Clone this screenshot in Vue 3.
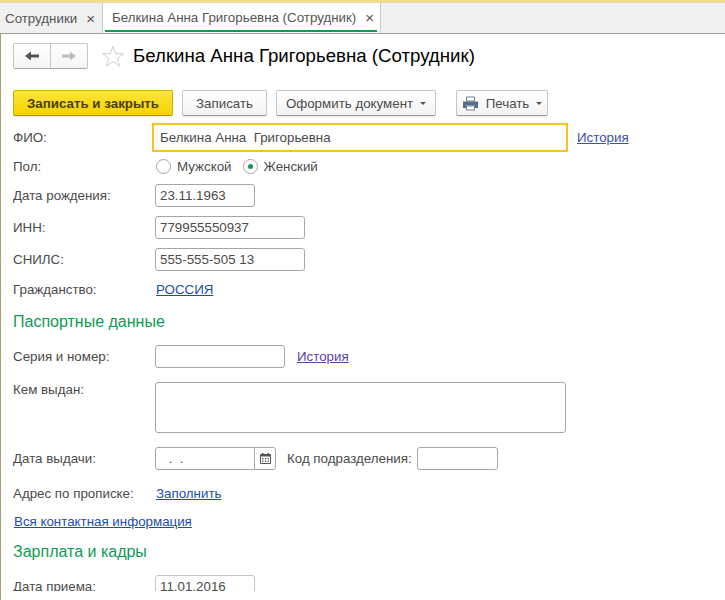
<script setup>
const dropdowns = ['Оформить документ'];
</script>

<template>
  <div class="page">
    <div class="topline"></div>
    <div class="tabs">
      <div class="tab">
        <span>Сотрудники</span>
        <span class="tab-x">×</span>
      </div>
      <div class="tab active">
        <span>Белкина Анна Григорьевна (Сотрудник)</span>
        <span class="tab-x">×</span>
      </div>
    </div>
    <div class="body">
      <div class="form">
        <div class="head">
          <div class="nav">
            <button class="nav-btn">
              <svg width="16" height="12" viewBox="0 0 16 12"><path d="M1 6 7 1.5V4.5H15V7.5H7V10.5Z" fill="#555" /></svg>
            </button>
            <button class="nav-btn">
              <svg width="16" height="12" viewBox="0 0 16 12"><path d="M15 6 9 1.5V4.5H1V7.5H9V10.5Z" fill="#bbb" /></svg>
            </button>
          </div>
          <svg class="star" width="24" height="23" viewBox="0 0 26 25">
            <path d="M13 1.5 16 9.5H24.5L17.7 14.6 20.2 23 13 18 5.8 23 8.3 14.6 1.5 9.5H10Z" fill="#fff" stroke="#c9c9c9" />
          </svg>
          <h1 class="title">Белкина Анна Григорьевна (Сотрудник)</h1>
        </div>

        <div class="toolbar">
          <button class="btn primary">Записать и закрыть</button>
          <button class="btn save">Записать</button>
          <button v-for="d in dropdowns" :key="d" class="btn doc">{{ d }}<i class="caret"></i></button>
          <button class="btn print">
            <svg width="17" height="15" viewBox="0 0 17 15">
              <path d="M4.5 1h8v4h-8z" fill="#fff" stroke="#6b7f91" />
              <path d="M1 5.5h15v6.5h-3v-2.5h-9v2.5h-3z" fill="#4f6f8c" />
              <path d="M4.5 10h8v4h-8z" fill="#fff" stroke="#6b7f91" />
            </svg>
            <span>Печать</span><i class="caret"></i>
          </button>
        </div>

        <div class="row fio">
          <label>ФИО:</label>
          <div class="input focused">Белкина Анна&nbsp; Григорьевна</div>
          <a class="link history">История</a>
        </div>

        <div class="row sex">
          <label>Пол:</label>
          <span class="radio first"></span><span class="radio-text">Мужской</span>
          <span class="radio on"></span><span class="radio-text">Женский</span>
        </div>

        <div class="row birth">
          <label>Дата рождения:</label>
          <div class="input w100">23.11.1963</div>
        </div>
        <div class="row inn">
          <label>ИНН:</label>
          <div class="input w150">779955550937</div>
        </div>
        <div class="row snils">
          <label>СНИЛС:</label>
          <div class="input w150">555-555-505 13</div>
        </div>
        <div class="row citizen">
          <label>Гражданство:</label>
          <a class="link">РОССИЯ</a>
        </div>

        <h2 class="section passport">Паспортные данные</h2>

        <div class="row number">
          <label>Серия и номер:</label>
          <div class="input w130"></div>
          <a class="link visited">История</a>
        </div>
        <div class="row issued">
          <label>Кем выдан:</label>
          <div class="input area"></div>
        </div>
        <div class="row issue-date">
          <label>Дата выдачи:</label>
          <div class="input date">
            <span class="date-value">&nbsp;.&nbsp;&nbsp;.</span>
            <span class="date-btn">
              <svg width="11" height="11" viewBox="0 0 11 11">
                <path d="M0.5 1.5h10v9h-10z" fill="#fff" stroke="#555" />
                <path d="M0.5 1h10v2.5h-10zM2 0h1.5v2H2zM7.5 0H9v2H7.5z" fill="#555" />
                <path d="M2 5h1.5v1.2H2zM4.8 5h1.5v1.2H4.8zM7.5 5H9v1.2H7.5zM2 7.6h1.5v1.2H2zM4.8 7.6h1.5v1.2H4.8zM7.5 7.6H9v1.2H7.5z" fill="#555" />
              </svg>
            </span>
          </div>
          <span class="code-label">Код подразделения:</span>
          <div class="input code"></div>
        </div>
        <div class="row address">
          <label>Адрес по прописке:</label>
          <a class="link">Заполнить</a>
        </div>
        <a class="link contacts">Вся контактная информация</a>

        <h2 class="section salary">Зарплата и кадры</h2>

        <div class="row hired">
          <label>Дата приема:</label>
          <div class="input w100">11.01.2016</div>
        </div>
      </div>
    </div>
  </div>
</template>

<style scoped>
.page {
  width: 725px;
  height: 600px;
  overflow: hidden;
  background: #fff;
  font-family: "Liberation Sans", Arial, sans-serif;
  font-size: 13.33px;
  color: #4b4b4b;
}
.topline {
  height: 2px;
  background: #f3dc8c;
  border-bottom: 1px solid #e8d8a0;
}
.tabs {
  display: flex;
  height: 30px;
  background: #f0f0f0;
  border-bottom: 1px solid #a0a0a0;
  padding-left: 1px;
}
.tab {
  display: flex;
  align-items: center;
  height: 30px;
  padding: 0 0 0 4px;
  width: 100px;
  box-sizing: border-box;
  justify-content: space-between;
  color: #555;
}
.tab-x {
  font-size: 15px;
  color: #555;
  margin-right: 6px;
}
.tab.active {
  width: 279px;
  margin-left: 1px;
  padding: 0 0 2px 9px;
  background: #fff;
  border-left: 1px solid #c8c8c8;
  border-right: 1px solid #c8c8c8;
  position: relative;
}
.tab.active::after {
  content: "";
  position: absolute;
  left: 2px;
  right: 3px;
  bottom: 1px;
  height: 2px;
  background: #0d9c53;
}
.body {
  border-left: 1px solid #a8a070;
  padding-left: 12px;
  height: 566px;
}
.form {
  height: 557px;
  overflow: hidden;
}
.head {
  display: flex;
  align-items: center;
  height: 26px;
  margin-top: 9px;
}
.nav {
  display: flex;
  width: 75px;
  height: 26px;
  box-sizing: border-box;
  border: 1px solid #c6c6c6;
  border-bottom-color: #a6a6a6;
  border-radius: 2px;
  background: linear-gradient(#fff, #f4f4f4);
}
.nav-btn {
  flex: 1;
  display: flex;
  align-items: center;
  justify-content: center;
  background: none;
  border: none;
  padding: 0;
}
.nav-btn + .nav-btn {
  border-left: 1px solid #c6c6c6;
}
.star {
  margin-left: 13px;
}
.title {
  margin: 0 0 0 8px;
  font-size: 18.67px;
  font-weight: normal;
  color: #000;
  white-space: nowrap;
}
.toolbar {
  display: flex;
  margin-top: 21px;
  height: 26px;
}
.btn {
  height: 26px;
  box-sizing: border-box;
  font-family: inherit;
  font-size: 13.33px;
  color: #4b4b4b;
  padding: 0;
  border: 1px solid #c6c6c6;
  border-bottom-color: #9a9a9a;
  border-radius: 2px;
  background: linear-gradient(#fff, #f3f3f3);
  display: flex;
  align-items: center;
  justify-content: center;
  box-shadow: 0 1px 1px rgba(0, 0, 0, 0.08);
}
.primary {
  width: 160px;
  font-weight: bold;
  color: #4a3f00;
  border-color: #cdb000;
  border-bottom-color: #a89000;
  background: linear-gradient(#fde43a, #f5d200);
}
.save {
  width: 85px;
  margin-left: 9px;
}
.doc {
  width: 160px;
  margin-left: 9px;
}
.print {
  width: 92px;
  margin-left: 20px;
}
.print span {
  margin-left: 7px;
}
.caret {
  display: inline-block;
  margin-left: 7px;
  margin-top: 1px;
  border-left: 3px solid transparent;
  border-right: 3px solid transparent;
  border-top: 3px solid #555;
}
.row {
  display: flex;
  align-items: center;
}
.row label {
  width: 142px;
  flex: none;
  color: #4b4b4b;
}
.input {
  box-sizing: border-box;
  height: 23px;
  line-height: 21px;
  padding-left: 4px;
  border: 1px solid #a6a6a6;
  border-radius: 3px;
  background: #fff;
  color: #4b4b4b;
  flex: none;
}
.link {
  color: #1c4fa8;
  text-decoration: underline;
}
.visited {
  color: #5a3f9e;
}
.fio {
  margin-top: 7px;
  height: 29px;
}
.fio label {
  width: 139px;
  margin-top: -1px;
}
.focused {
  width: 416px;
  height: 29px;
  line-height: 25px;
  padding-left: 6px;
  border: 2px solid #f5c518;
  border-radius: 0;
}
.history {
  margin-left: 9px;
  color: #3b50a8;
}
.sex {
  margin-top: 4px;
  height: 20px;
}
.radio {
  box-sizing: border-box;
  width: 15px;
  height: 15px;
  border: 1px solid #a6a6a6;
  border-radius: 50%;
  background: #fff;
  display: flex;
  align-items: center;
  justify-content: center;
  margin-right: 6px;
  flex: none;
}
.radio.first {
  margin-left: 1px;
}
.radio.on {
  margin-right: 5px;
}
.radio.on::after {
  content: "";
  width: 5px;
  height: 5px;
  border-radius: 50%;
  background: #0d9c53;
}
.radio-text {
  margin-right: 12px;
  color: #4b4b4b;
}
.birth {
  margin-top: 8px;
}
.w100 {
  width: 100px;
}
.w130 {
  width: 130px;
}
.w150 {
  width: 150px;
}
.inn,
.snils {
  margin-top: 9px;
}
.citizen {
  margin-top: 10px;
  height: 16px;
}
.citizen .link,
.address .link {
  margin-left: 1px;
}
.section {
  margin: 0;
  font-size: 16px;
  font-weight: normal;
  color: #0d9c53;
  line-height: 20px;
}
.passport {
  margin-top: 15px;
}
.number {
  margin-top: 13px;
}
.number .link {
  margin-left: 12px;
}
.issued {
  margin-top: 14px;
  align-items: flex-start;
}
.area {
  width: 411px;
  height: 51px;
}
.issue-date {
  margin-top: 14px;
}
.date {
  display: flex;
  width: 121px;
  padding: 0;
  justify-content: space-between;
}
.date-value {
  padding-left: 9px;
}
.date-btn {
  width: 20px;
  border-left: 1px solid #a6a6a6;
  display: flex;
  align-items: center;
  justify-content: center;
}
.code-label {
  margin-left: 11px;
  color: #4b4b4b;
}
.code {
  width: 81px;
  margin-left: 5px;
}
.address {
  margin-top: 15px;
  height: 16px;
}
.contacts {
  display: block;
  margin: 13px 0 0 1px;
  line-height: 16px;
}
.salary {
  margin-top: 12px;
}
.hired {
  margin-top: 13px;
}
.hired .input {
  border-color: #c6c6c6;
}
</style>

<style>
html,
body {
  background: #fff;
}
</style>
